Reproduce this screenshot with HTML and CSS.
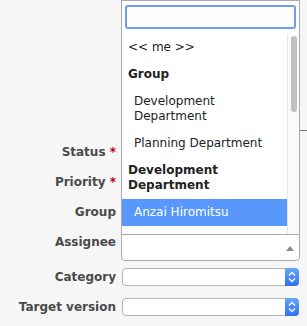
FILE: index.html
```html
<!DOCTYPE html>
<html lang="en">
<head>
  <meta charset="UTF-8">
  <title>Issue attributes</title>
  <link rel="stylesheet" href="styles.css">
</head>
<body>
  <div class="page">
    <div class="attributes">
      <div class="row">
        <label class="label">Status <span class="required">*</span></label>
        <div class="field"></div>
      </div>
      <div class="row">
        <label class="label">Priority <span class="required">*</span></label>
        <div class="field"></div>
      </div>
      <div class="row">
        <label class="label">Group</label>
        <div class="field"></div>
      </div>
      <div class="row row-top">
        <label class="label">Assignee</label>
        <div class="field assignee">
          <!-- select2 dropdown, opened above -->
          <div class="dropdown">
            <div class="search">
              <input type="text" class="search-input">
            </div>
            <div class="results-wrap">
              <ul class="results">
                <li class="option">&lt;&lt; me &gt;&gt;</li>
                <li class="group">
                  <strong class="group-title">Group</strong>
                  <ul>
                    <li class="option nested">Development Department</li>
                    <li class="option nested">Planning Department</li>
                  </ul>
                </li>
                <li class="group">
                  <strong class="group-title">Development Department</strong>
                  <ul>
                    <li class="option nested highlighted">Anzai Hiromitsu</li>
                    <li class="option nested"></li>
                  </ul>
                </li>
              </ul>
              <div class="scrollbar"><div class="thumb"></div></div>
            </div>
          </div>
          <div class="selection">
            <span class="arrow-up"></span>
          </div>
        </div>
      </div>
      <div class="row">
        <label class="label">Category</label>
        <div class="field">
          <div class="select">
            <span class="stepper">
              <svg width="8" height="12" viewBox="0 0 8 12"><path d="M1 4.5L4 1.5L7 4.5M1 7.5L4 10.5L7 7.5" fill="none" stroke="#fff" stroke-width="1.3"/></svg>
            </span>
          </div>
        </div>
      </div>
      <div class="row">
        <label class="label">Target version</label>
        <div class="field">
          <div class="select">
            <span class="stepper">
              <svg width="8" height="12" viewBox="0 0 8 12"><path d="M1 4.5L4 1.5L7 4.5M1 7.5L4 10.5L7 7.5" fill="none" stroke="#fff" stroke-width="1.3"/></svg>
            </span>
          </div>
        </div>
      </div>
    </div>
    <div class="side">
      <div class="side-box"></div>
    </div>
  </div>
</body>
</html>
```

FILE: styles.css
```css
body {
  margin: 0;
  background: #f6f6f6;
  font-family: "DejaVu Sans", Verdana, sans-serif;
  font-size: 12px;
  color: #222;
}
.page {
  display: flex;
  height: 326px;
  overflow: hidden;
}
.attributes {
  width: 300px;
  flex: none;
  padding-top: 137px;
}
.side {
  flex: 1;
}
.side-box {
  margin-top: 130px;
  border-top: 1px solid #777;
}
.row {
  display: flex;
  align-items: center;
  height: 30px;
}
.row-top {
  align-items: flex-start;
  height: 35px;
}
.label {
  width: 116px;
  flex: none;
  margin-right: 5px;
  text-align: right;
  font-weight: bold;
  color: #4a4a4a;
  line-height: 15px;
}
.row-top .label {
  padding-top: 8px;
}
.required {
  color: #bb0000;
}
.field {
  flex: 1;
}

/* assignee select2 */
.assignee {
  position: relative;
  margin-top: 7px;
}
.selection {
  position: relative;
  height: 27px;
  box-sizing: border-box;
  border: 1px solid #aaa;
  border-radius: 0 0 4px 4px;
  background: #fff;
}
.arrow-up {
  position: absolute;
  left: 164px;
  top: 11px;
  border-style: solid;
  border-width: 0 4px 5px 4px;
  border-color: transparent transparent #888 transparent;
}
.dropdown {
  position: absolute;
  left: 0;
  right: 0;
  bottom: calc(100% - 1px);
  height: 235px;
  box-sizing: border-box;
  border: 1px solid #aaa;
  background: #fff;
  display: flex;
  flex-direction: column;
  z-index: 2;
}
.search {
  padding: 4px 3px 5px;
}
.search-input {
  display: block;
  box-sizing: border-box;
  width: 100%;
  height: 24px;
  margin: 0;
  border: 2px solid #6c9eee;
  border-radius: 3px;
  outline: none;
  background: #fff;
}
.results-wrap {
  flex: 1;
  display: flex;
  min-height: 0;
}
.results {
  list-style: none;
  margin: 0;
  padding: 0;
  flex: 1;
  overflow: hidden;
  line-height: 15px;
}
.results ul {
  list-style: none;
  margin: 0;
  padding: 0;
}
.scrollbar {
  width: 12px;
  flex: none;
  background: #fafafa;
  border-left: 1px solid #e6e6e6;
  padding: 2px 2px 0 3px;
  box-sizing: border-box;
}
.thumb {
  height: 76px;
  border-radius: 4px;
  background: #c1c1c1;
}
.option,
.group-title {
  display: block;
  padding: 6px;
  min-height: 15px;
}
.nested {
  padding-left: 12px;
}
.highlighted {
  background: #5897fb;
  color: #fff;
}

/* plain selects */
.select {
  position: relative;
  height: 18px;
  margin: 0 1px;
  box-sizing: border-box;
  border: 1px solid #b4b4b4;
  border-radius: 4px;
  background: #fff;
}
.stepper {
  position: absolute;
  top: -1px;
  right: -1px;
  width: 14px;
  height: 18px;
  border-radius: 0 4px 4px 0;
  background: linear-gradient(#6aa6fb, #2f6ff2);
  display: flex;
  align-items: center;
  justify-content: center;
}
.stepper svg {
  display: block;
}
```
